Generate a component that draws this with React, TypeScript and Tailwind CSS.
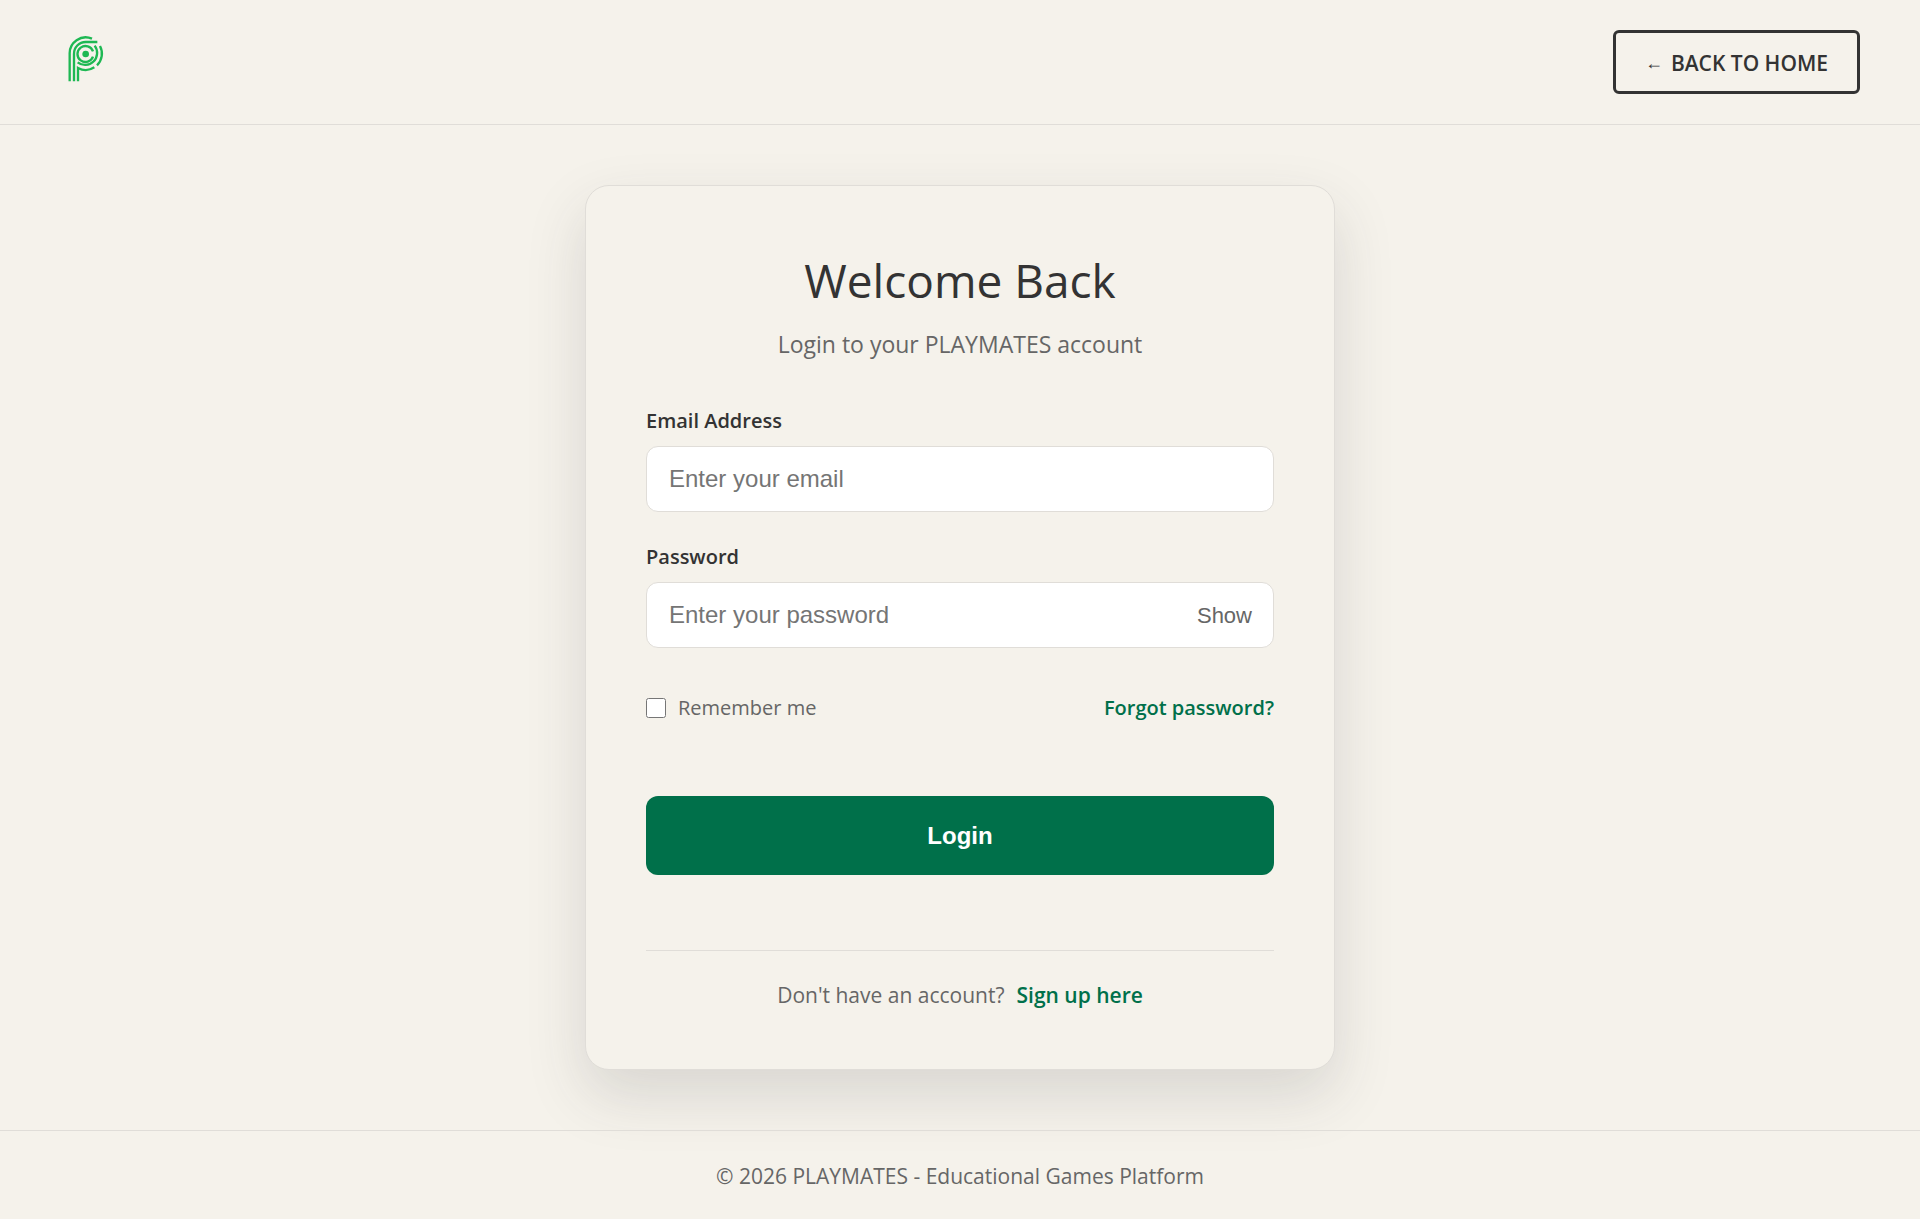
import * as React from 'react';

const { useState } = React;

const Logo = () => (
	<svg
		className="w-9 h-12"
		viewBox="83 45 108 144"
		fill="none"
		stroke="#1eb853"
		strokeWidth="7"
		role="img"
		aria-label="PLAYMATES"
	>
		<path d="M88 184V102A48 48 0 0 1 155 56" />
		<path d="M101 184V102A35 35 0 0 1 136 66H171" />
		<path d="M113 184V144A48 48 0 0 0 162 142" />
		<path d="M158 94A24 24 0 1 0 158 110" />
		<path d="M163 77A36 36 0 0 1 112 127" />
		<path d="M179 78A49 49 0 0 1 170 136" />
		<circle cx="136" cy="102" r="10" fill="#1eb853" stroke="none" />
	</svg>
);

const Header = () => (
	<header className="flex items-center justify-between px-[60px] py-[30px] border-b border-[#e0ddd8]">
		<a href="#" className="mb-1.5 ml-2">
			<Logo />
		</a>
		<a
			href="#"
			className="flex items-center gap-2 border-[3px] border-[#333333] rounded-md px-[29px] pt-[15px] pb-[13px] text-[21px] leading-[30px] font-semibold"
		>
			<span className="font-['Liberation_Sans',sans-serif] text-lg leading-[30px] font-normal">
				←
			</span>
			BACK TO HOME
		</a>
	</header>
);

const inputClasses =
	"block w-full rounded-xl border border-[#e0ddd8] bg-white px-[22px] py-4 font-['Liberation_Sans',sans-serif] text-2xl leading-8 placeholder:text-[#757575]";
const labelClasses = 'block mb-2.5 text-xl leading-[30px] font-semibold';

const LoginForm = () => {
	const [showPassword, setShowPassword] = useState<boolean>(false);

	return (
		<form onSubmit={(e) => e.preventDefault()}>
			<div className="mb-[30px]">
				<label htmlFor="email" className={labelClasses}>
					Email Address
				</label>
				<input
					id="email"
					type="email"
					placeholder="Enter your email"
					className={inputClasses}
				/>
			</div>
			<div className="mb-[45px]">
				<label htmlFor="password" className={labelClasses}>
					Password
				</label>
				<div className="relative">
					<input
						id="password"
						type={showPassword ? 'text' : 'password'}
						placeholder="Enter your password"
						className={inputClasses}
					/>
					<button
						type="button"
						onClick={() => setShowPassword(!showPassword)}
						className="absolute inset-y-0 right-0 px-[22px] font-['Liberation_Sans',sans-serif] text-[22px] text-[#666666]"
					>
						{showPassword ? 'Hide' : 'Show'}
					</button>
				</div>
			</div>
			<div className="flex items-center justify-between mb-[73px] text-xl leading-[30px]">
				<label className="flex items-center gap-3 text-[#666666]">
					<input type="checkbox" className="size-5" />
					Remember me
				</label>
				<a href="#" className="font-semibold text-[#00704a]">
					Forgot password?
				</a>
			</div>
			<button
				type="submit"
				className="block w-full rounded-xl bg-[#00704a] py-6 font-['Liberation_Sans',sans-serif] text-2xl leading-[31px] font-bold text-white"
			>
				Login
			</button>
		</form>
	);
};

const App = () => {
	return (
		<div className="flex flex-col min-h-screen bg-[#f5f2eb] font-['Open_Sans',sans-serif] text-[#333333]">
			<Header />
			<main className="flex-1 flex items-center justify-center px-5 py-[60px]">
				<div className="w-full max-w-[750px] rounded-3xl border border-[#e0ddd8] bg-[#f5f2eb] p-[60px] shadow-[0_25px_60px_rgba(51,51,60,0.15)]">
					<h1 className="mb-3.5 text-center text-[46px] leading-[68px]">
						Welcome Back
					</h1>
					<p className="mb-[46px] text-center text-[23px] leading-8 text-[#666666]">
						Login to your PLAYMATES account
					</p>
					<LoginForm />
					<p className="mt-[75px] border-t border-[#e0ddd8] pt-[30px] text-center text-[21px] leading-7 text-[#666666]">
						Don't have an account?
						<a href="#" className="ml-3 font-semibold text-[#00704a]">
							Sign up here
						</a>
					</p>
				</div>
			</main>
			<footer className="border-t border-[#e0ddd8] pt-[30px] pb-7 text-center text-[21px] leading-[30px] text-[#666666]">
				© 2026 PLAYMATES - Educational Games Platform
			</footer>
		</div>
	);
};

export default App;
